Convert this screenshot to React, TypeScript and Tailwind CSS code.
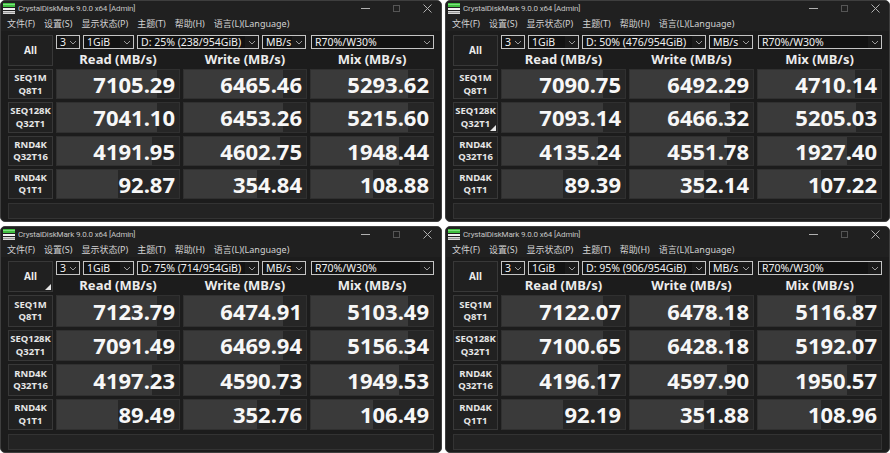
import React from "react";

type Win = {
  drive: string;
  rows: [number, number, number][];
  markAll?: boolean;
  markRow?: number;
};

const LABELS: [string, string][] = [
  ["SEQ1M", "Q8T1"],
  ["SEQ128K", "Q32T1"],
  ["RND4K", "Q32T16"],
  ["RND4K", "Q1T1"],
];

const WINS: Win[] = [
  {
    drive: "D: 25% (238/954GiB)",
    rows: [
      [7105.29, 6465.46, 5293.62],
      [7041.1, 6453.26, 5215.6],
      [4191.95, 4602.75, 1948.44],
      [92.87, 354.84, 108.88],
    ],
  },
  {
    drive: "D: 50% (476/954GiB)",
    markRow: 1,
    rows: [
      [7090.75, 6492.29, 4710.14],
      [7093.14, 6466.32, 5205.03],
      [4135.24, 4551.78, 1927.4],
      [89.39, 352.14, 107.22],
    ],
  },
  {
    drive: "D: 75% (714/954GiB)",
    markAll: true,
    rows: [
      [7123.79, 6474.91, 5103.49],
      [7091.49, 6469.94, 5156.34],
      [4197.23, 4590.73, 1949.53],
      [89.49, 352.76, 106.49],
    ],
  },
  {
    drive: "D: 95% (906/954GiB)",
    rows: [
      [7122.07, 6478.18, 5116.87],
      [7100.65, 6428.18, 5192.07],
      [4196.17, 4597.9, 1950.57],
      [92.19, 351.88, 108.96],
    ],
  },
];

const TITLE = { fontFamily: 'Roboto, "Noto Sans", sans-serif' };
const DROP = { fontFamily: '"Noto Sans", Roboto, sans-serif' };
const CJK = { fontFamily: '"Noto Sans", "Noto Sans CJK SC", sans-serif' };
const NUM = { fontFamily: '"Noto Sans", "Open Sans", sans-serif' };

function Chevron() {
  return (
    <svg width="8" height="5" viewBox="0 0 8 5" fill="none">
      <path d="M1 1 L4 4 L7 1" stroke="#9a9a9a" strokeWidth="1" />
    </svg>
  );
}

function Drop({ text, className }: { text: string; className: string }) {
  return (
    <div className={`flex h-full items-stretch border border-[#c4c4c4] bg-[#121212] ${className}`}>
      <div
        className="flex flex-1 items-center overflow-hidden whitespace-nowrap pl-[3px] text-[10.5px] leading-none text-[#f0f0f0]"
        style={DROP}
      >
        {text}
      </div>
      <div className="flex w-[13px] items-center justify-center bg-[#1a1a1a]">
        <Chevron />
      </div>
    </div>
  );
}

function Triangle() {
  return (
    <div className="absolute bottom-[1px] right-[1px] h-0 w-0 border-b-[6px] border-l-[6px] border-b-[#e6e6e6] border-l-transparent" />
  );
}

function AppIcon() {
  return (
    <svg width="12" height="11" viewBox="0 0 12 11">
      <rect x="0" y="0" width="12" height="4" fill="#3fbf3f" />
      <rect x="0" y="1" width="12" height="1" fill="#7de07d" />
      <rect x="0" y="5" width="12" height="2" fill="#f2f2f2" />
      <rect x="0" y="8" width="12" height="3" fill="#d8d8d8" />
      <rect x="0" y="9" width="12" height="1" fill="#9a9a9a" />
    </svg>
  );
}

function fraction(v: number) {
  const f = 0.165 + 0.17 * Math.log10(v);
  return Math.max(0, Math.min(1, f)) * 100;
}

function Cell({ v }: { v: number }) {
  return (
    <div className="relative overflow-hidden border border-[#303030] bg-[#262626]">
      <div className="absolute inset-y-0 left-0 bg-[#3a3a3a]" style={{ width: `${fraction(v)}%` }} />
      <div
        className="relative flex h-full items-center justify-end pr-[4px] text-[22px] font-bold leading-none text-[#f7f7f7]"
        style={NUM}
      >
        {v.toFixed(2)}
      </div>
    </div>
  );
}

function Window({ w }: { w: Win }) {
  return (
    <div className="flex h-full flex-col overflow-hidden rounded-[5px] border border-[#3e3e3e] bg-[#1c1c1c]">
      <div className="flex h-[15px] shrink-0 items-center bg-[#202020] pl-[2px]">
        <AppIcon />
        <span className="ml-[3px] text-[8px] leading-none tracking-[-0.15px] text-[#c4c4c4]" style={TITLE}>
          CrystalDiskMark 9.0.0 x64 [Admin]
        </span>
        <div className="ml-auto flex items-center gap-[23px] pr-[9px]">
          <div className="h-px w-[9px] bg-[#b0b0b0]" />
          <div className="h-[7px] w-[7px] border border-[#555555]" />
          <svg width="9" height="9" viewBox="0 0 9 9">
            <path d="M0.5 0.5 L8.5 8.5 M8.5 0.5 L0.5 8.5" stroke="#b0b0b0" strokeWidth="1" />
          </svg>
        </div>
      </div>
      <div
        className="flex h-[15px] shrink-0 items-center gap-[9px] bg-[#202020] pl-[6px] text-[9px] leading-none text-[#d2d2d2]"
        style={CJK}
      >
        <span>文件(F)</span>
        <span>设置(S)</span>
        <span>显示状态(P)</span>
        <span>主题(T)</span>
        <span>帮助(H)</span>
        <span>语言(L)(Language)</span>
      </div>
      <div className="flex flex-1 flex-col gap-[3px] px-[7px] pb-[2px] pt-[4px]">
        <div className="flex h-[31px] shrink-0 gap-[3px]">
          <div
            className="relative flex w-[45px] items-center justify-center border border-[#383838] bg-[#202020] text-[10px] font-bold text-[#ececec]"
            style={NUM}
          >
            All
            {w.markAll && <Triangle />}
          </div>
          <div className="flex flex-1 flex-col gap-[2px]">
            <div className="grid h-[14px] grid-cols-[1fr_1fr_1fr] gap-x-[3px]">
              <div className="col-span-2 flex gap-[3px] pr-[1px]">
                <Drop text="3" className="w-[24px]" />
                <Drop text="1GiB" className="w-[51px]" />
                <Drop text={w.drive} className="flex-1" />
                <Drop text="MB/s" className="w-[44px]" />
              </div>
              <div className="pl-[1px]">
                <Drop text="R70%/W30%" className="w-full" />
              </div>
            </div>
            <div
              className="grid flex-1 grid-cols-[1fr_1fr_1fr] gap-x-[3px] text-[13px] font-bold leading-none text-[#ececec]"
              style={NUM}
            >
              <div className="flex items-end justify-center">Read (MB/s)</div>
              <div className="flex items-end justify-center">Write (MB/s)</div>
              <div className="flex items-end justify-center">Mix (MB/s)</div>
            </div>
          </div>
        </div>
        <div className="grid flex-1 grid-cols-[45px_1fr_1fr_1fr] grid-rows-4 gap-[3px]">
          {w.rows.map((r, i) => (
            <React.Fragment key={i}>
              <div
                className="relative flex flex-col items-center justify-center gap-[3px] border border-[#383838] bg-[#212121] text-[9.5px] font-bold leading-none text-[#e6e6e6]"
                style={NUM}
              >
                <span>{LABELS[i][0]}</span>
                <span>{LABELS[i][1]}</span>
                {w.markRow === i && <Triangle />}
              </div>
              <Cell v={r[0]} />
              <Cell v={r[1]} />
              <Cell v={r[2]} />
            </React.Fragment>
          ))}
        </div>
        <div className="mt-[1px] h-[16px] shrink-0 border border-[#333333] bg-[#232323]" />
      </div>
    </div>
  );
}

export default function App() {
  return (
    <div className="grid h-[453px] w-[890px] grid-cols-[442px_445px] grid-rows-[222px_227px] gap-x-[3px] gap-y-[4px] bg-white">
      {WINS.map((w, i) => (
        <Window key={i} w={w} />
      ))}
    </div>
  );
}
